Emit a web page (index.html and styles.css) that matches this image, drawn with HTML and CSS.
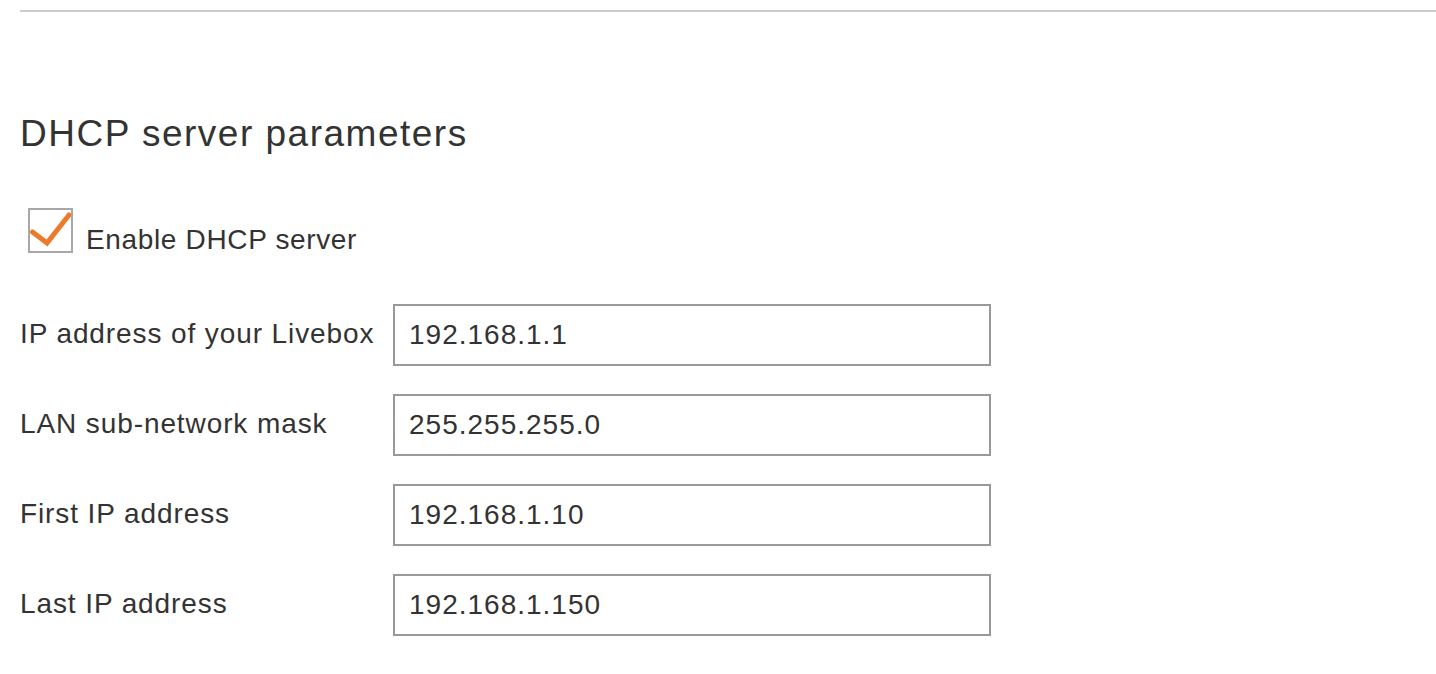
FILE: index.html
```html
<!DOCTYPE html>
<html lang="en">
<head>
<meta charset="utf-8">
<title>DHCP server parameters</title>
<link rel="stylesheet" href="styles.css">
</head>
<body>
<div class="page">
  <div class="rule"></div>
  <h2 class="title">DHCP server parameters</h2>
  <label class="check-row">
    <span class="checkbox">
      <svg class="tick" width="41" height="41" viewBox="0 0 41 41" aria-hidden="true">
        <path d="M2.5 22 L17 33 L39 5" fill="none" stroke="#ec7a2a" stroke-width="5" stroke-linecap="round" stroke-linejoin="miter"/>
      </svg>
    </span>
    <span class="check-label">Enable DHCP server</span>
  </label>
  <div class="form">
    <div class="label">IP address of your Livebox</div>
    <div class="field">192.168.1.1</div>
    <div class="label">LAN sub-network mask</div>
    <div class="field">255.255.255.0</div>
    <div class="label">First IP address</div>
    <div class="field">192.168.1.10</div>
    <div class="label">Last IP address</div>
    <div class="field">192.168.1.150</div>
  </div>
</div>
</body>
</html>
```
FILE: styles.css
```css
html, body {
  margin: 0;
  padding: 0;
  background: #ffffff;
}

body {
  font-family: "Liberation Sans", Arial, Helvetica, sans-serif;
  color: #333333;
}

.page {
  padding-left: 20px;
}

.rule {
  margin-top: 10px;
  height: 2px;
  background: #cccccc;
}

.title {
  margin: 101px 0 0 0;
  font-size: 37px;
  line-height: 42px;
  letter-spacing: 1.5px;
  font-weight: normal;
  color: #333333;
}

.check-row {
  display: flex;
  align-items: flex-start;
  margin-top: 53px;
  margin-left: 8px;
}

.checkbox {
  box-sizing: border-box;
  width: 45px;
  height: 45px;
  border: 2px solid #a8a8a8;
  background: #ffffff;
  flex: none;
}

.tick {
  display: block;
  overflow: visible;
}

.check-label {
  margin-left: 13px;
  padding-top: 16px;
  font-size: 28px;
  line-height: 32px;
  letter-spacing: 0.65px;
  white-space: nowrap;
}

.form {
  display: grid;
  grid-template-columns: 373px 598px;
  row-gap: 28px;
  margin-top: 48px;
}

.label {
  padding-top: 14px;
  font-size: 28px;
  line-height: 32px;
  letter-spacing: 0.9px;
  white-space: nowrap;
}

.field {
  box-sizing: border-box;
  height: 62px;
  border: 2px solid #999999;
  padding: 0 14px;
  display: flex;
  align-items: center;
  font-size: 28px;
  letter-spacing: 1px;
  color: #333333;
  background: #ffffff;
}
```
